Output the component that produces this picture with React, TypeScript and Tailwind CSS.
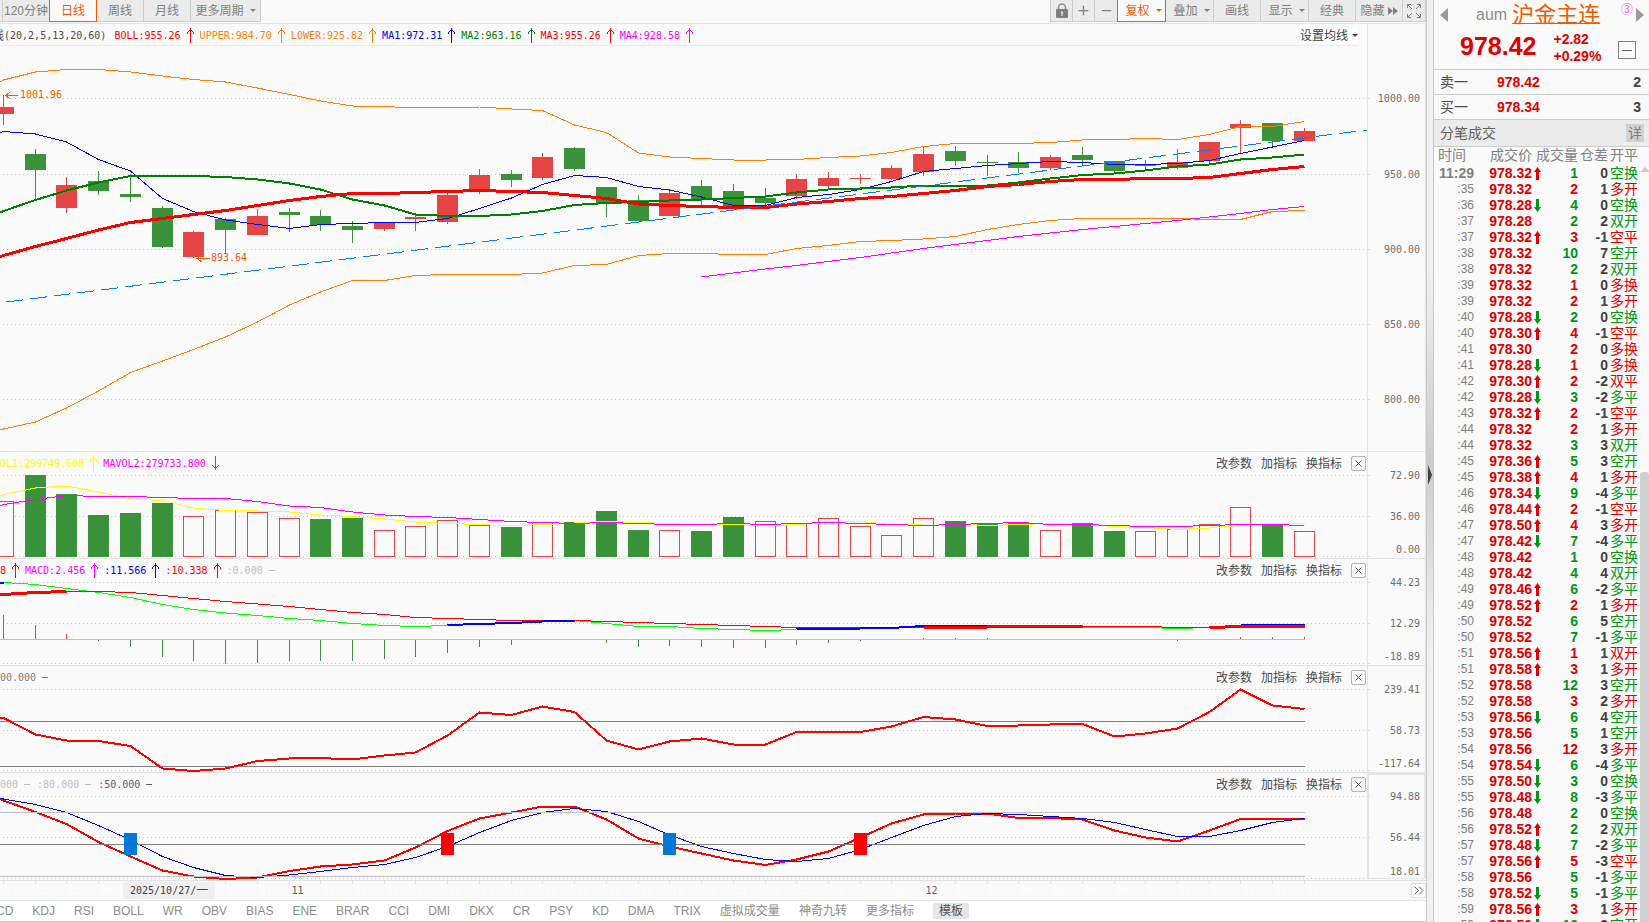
import React from 'react';
import { Minus, Plus, X } from 'lucide-react';

type Dir = 'up' | 'down' | 'flat';
type Candle = [color: 'r' | 'g', high: number, low: number, top: number, bottom: number];
type Tick = [time: string, price: string, dir: '' | 'u' | 'd', volume: number, side: 'r' | 'g', diff: number, type: string];

const RED = '#e64545';
const GREEN = '#3a923a';

// Distance between two trading days and centre of the first one
const STEP = 31.73;
const FIRST = 3.5;
const xAt = (i: number) => Math.floor(FIRST + i * STEP) + 0.5;

const CANDLES: Candle[] = [
    ['r', 95, 125, 107, 114], ['g', 149, 199, 154, 170], ['r', 177, 213, 185, 208], ['g', 171, 195, 181, 191],
    ['g', 174, 202, 194, 197], ['g', 206, 248, 208, 247], ['r', 231, 258, 232, 257], ['g', 218, 254, 219, 230],
    ['r', 209, 235, 216, 235], ['g', 208, 232, 212, 215], ['g', 210, 231, 216, 225], ['g', 221, 243, 226, 230],
    ['r', 222, 231, 223, 229], ['r', 215, 231, 217, 219], ['r', 192, 224, 195, 222], ['r', 169, 194, 175, 190],
    ['g', 170, 187, 174, 180], ['r', 153, 180, 157, 178], ['g', 147, 171, 148, 169], ['g', 187, 217, 187, 203],
    ['g', 195, 221, 200, 221], ['r', 191, 216, 193, 216], ['g', 180, 205, 186, 200], ['g', 184, 206, 191, 206],
    ['g', 188, 205, 198, 203], ['r', 174, 199, 179, 196], ['r', 172, 189, 178, 186], ['r', 174, 184, 178, 179],
    ['r', 165, 180, 168, 179], ['r', 147, 176, 154, 172], ['g', 146, 166, 151, 161], ['g', 155, 176, 162, 163],
    ['g', 152, 173, 162, 168], ['r', 155, 170, 157, 168], ['g', 147, 166, 155, 160], ['g', 161, 172, 161, 171],
    ['r', 160, 170, 165, 166], ['r', 149, 169, 162, 168], ['r', 142, 164, 142, 161], ['r', 120, 153, 124, 128],
    ['g', 123, 147, 123, 141], ['r', 128, 141, 131, 141],
];

const UPPER = [80, 72, 69.5, 69.5, 72, 76, 79.5, 82, 88, 94.5, 101, 106, 106.5, 108, 107.5, 107, 109, 110.5, 125, 132.5, 153, 157, 158.5, 160, 160, 159.5, 157.5, 156, 152.5, 146.5, 143.5, 143.5, 143.5, 142.5, 140, 139.5, 138.5, 139.5, 134.5, 126.5, 126.5, 121.5];
const LOWER = [429, 422, 408, 391, 372.5, 361, 349.5, 337, 322, 305, 292, 280.5, 280.5, 275.5, 274.5, 274.5, 274.5, 273, 265.5, 264.5, 255.5, 253.5, 253.5, 254.5, 254.5, 248.5, 245.5, 241.5, 240.5, 239, 236.5, 229.5, 224.5, 220.5, 218.5, 218.5, 218.5, 218.5, 219.5, 219.5, 211.5, 210.5];
const MA1 = [131.5, 134, 142, 159.5, 171, 198.5, 211.5, 220, 224.5, 228.5, 224.5, 223.5, 222.5, 222.5, 218.5, 208.5, 198, 184.5, 175.5, 177.5, 186.5, 190, 197, 205.5, 205.5, 197.5, 194.5, 189.5, 181.5, 171.5, 168.5, 165.5, 163.5, 161.5, 162.5, 164.5, 164.5, 163.5, 160.5, 153.5, 147, 140.5];
const MA2 = [211, 200, 190.5, 182.5, 176, 176, 176, 177, 179.5, 183.5, 189.5, 199.5, 205.5, 214.5, 216, 216, 214.5, 211, 205, 203, 202, 200.5, 199.5, 198, 196.5, 192.5, 189.5, 188.5, 187.5, 185.5, 185.5, 185.5, 182.5, 178.5, 175, 173.5, 170.5, 166.5, 164.5, 159.5, 157.5, 154.5];
const BOLL = [255.5, 246.5, 238.5, 230, 222.5, 218.5, 214.5, 210.5, 205.5, 200.5, 196.5, 193.5, 193.5, 192.5, 191.5, 190.5, 191.5, 192.5, 195.5, 198.5, 204, 205.5, 206.5, 207.5, 207.5, 204, 201.5, 198.5, 196.5, 193.5, 190.5, 186.5, 184.5, 181.5, 179.5, 179.5, 178.5, 178.5, 177.5, 173.5, 169.5, 166.5];
const MA4 = [277, 273, 269, 265.5, 261.5, 257.5, 253, 248.5, 244.5, 240.5, 236.5, 233, 229.5, 226.5, 223.5, 220.5, 217, 213.5, 209.5, 206.5];

const VOLUME_TOP = [501, 475, 494, 515, 513, 503, 516, 510, 512, 518, 519, 518, 530, 526, 520, 525, 527, 522, 522, 511, 530, 530, 531, 517, 521, 523, 518, 526, 535, 518, 521, 524, 522, 530, 523, 531, 531, 529, 524, 507, 525, 531];
const VOLUME_FALLING = [1, 2, 3, 4, 5, 10, 11, 16, 18, 19, 20, 22, 23, 30, 31, 32, 34, 35, 40];
const MAVOL1 = [494.5, 488, 486, 492, 499, 500.5, 508, 510.5, 511, 512, 515, 516.5, 519, 522, 523.5, 524.5, 526, 524.5, 523, 521.5, 522.5, 523.5, 525, 524.5, 526, 524.5, 522.5, 521.5, 524.5, 524, 524, 525.5, 524.5, 523.5, 524.5, 526.5, 527.5, 529.5, 528, 525.5, 523.5, 523.5];
const MAVOL2 = [504.5, 499.5, 495.5, 496.5, 496.5, 497.5, 498.5, 498.5, 501.5, 506, 507.5, 512, 515, 516.5, 517.5, 519.5, 521.5, 522.5, 523.5, 522.5, 523.5, 524.5, 524.5, 523.5, 524.5, 523.5, 522.5, 523.5, 524.5, 525.5, 524.5, 523.5, 522.5, 524.5, 524.5, 525.5, 526.5, 526.5, 525.5, 524.5, 524.5, 525.5];

const MACD_BASE = 639;
const MACD_BARS = [615, 625, 634, 641, 647, 657, 661, 664, 663, 661, 661, 661, 659, 657, 653, 647, 645, 0, 0, 643, 647, 646, 647, 648, 648, 645, 643, 641, 0, 638, 638, 638, 0, 0, 0, 0, 0, 641, 0, 637, 637, 637];
const MACD_LINES: { from: number; color: string; width: number; ys: number[] }[] = [
    { from: 0, color: '#00ff00', width: 1, ys: [582.5, 584.5, 588.5, 592.5, 597.5, 604.5, 609.5, 613, 615.5, 618.5, 620.5, 623.5, 625.5, 626.5, 625.5] },
    { from: 18, color: '#00ff00', width: 1, ys: [620.5, 623.5, 626.5, 626.5, 628.5, 629.5, 630.5, 629.5] },
    { from: 31, color: '#00ff00', width: 1, ys: [625.5, 626.5, 626.5, 627.5, 627.5, 627.5, 628.5, 627.5] },
    { from: 0, color: '#ff0000', width: 1, ys: [594.5, 592.5, 591.5, 591.5, 592.5, 595.5, 598.5, 601.5, 604, 606.5, 609.5, 612.5, 614.5, 617.5, 618.5, 619.5, 620.5, 620.5, 620.5, 621.5, 622.5, 623.5, 624.5, 625.5, 626.5, 627.5, 627.5, 627.5, 627.5, 627.5, 627.5, 627, 626.5, 626.5, 626.5, 626.5, 626.5, 627.5, 627.5, 626.5, 626.5, 626.5] },
    { from: 14, color: '#0000ff', width: 2, ys: [625, 624, 623, 621.5, 621] },
    { from: 25, color: '#0000ff', width: 2, ys: [629.5, 629, 628.5, 628, 626, 626, 626] },
    { from: 39, color: '#0000ff', width: 2, ys: [625, 625, 625] },
    { from: 0, color: '#ff0000', width: 3, ys: [594.5, 592.5, 591.5] },
    { from: 29, color: '#ff0000', width: 3, ys: [627.5, 627.5, 627, 626.5, 626.5, 626.5] },
    { from: 38, color: '#ff0000', width: 3, ys: [627.5, 626.5, 626.5, 626.5] },
];

const CCI = [718, 734.5, 740.5, 741, 746, 768.5, 771, 768.5, 761, 758.5, 758, 759.5, 755.5, 752.5, 735.5, 712.5, 715, 706.5, 712, 740.5, 749.5, 741.5, 738.5, 744.5, 744.5, 732, 732, 732, 726.5, 717, 719.5, 726, 725.5, 724.5, 724, 736.5, 733.5, 728.5, 712, 689.5, 705.5, 709];
const KD_FAST = [800.5, 812, 824, 842, 856.5, 870.5, 876.5, 879, 877.5, 871, 866.5, 864.5, 860.5, 847.5, 831, 818.5, 812.5, 806.5, 806.5, 819.5, 838.5, 846.5, 853.5, 860.5, 865, 859.5, 851.5, 837.5, 823.5, 814.5, 813.5, 813.5, 818, 818, 819.5, 830.5, 837.5, 841.5, 830.5, 819, 819, 819];
const KD_SLOW = [799, 804.5, 812.5, 825.5, 840, 856.5, 867.5, 875.5, 877.5, 875, 871.5, 867.5, 864.5, 857.5, 846.5, 832.5, 820.5, 812.5, 808.5, 811.5, 821.5, 835, 846.5, 853.5, 859.5, 861.5, 858.5, 849.5, 837.5, 825.5, 816.5, 813.5, 814.5, 816.5, 818.5, 822.5, 829.5, 836.5, 836.5, 830.5, 822.5, 818.5];
const KD_MARKS: [number, string][] = [[4, '#0078d7'], [14, '#ff0000'], [21, '#0078d7'], [27, '#ff0000']];

// Empty entries lie under the date chip
const DAYS = ['21', '22', '23', '24', '', '', '', '30', '31', '11', '04', '05', '06', '07', '10', '11', '12', '13', '14', '17', '18', '19', '20', '21', '24', '25', '26', '27', '28', '12', '02', '03', '04', '05', '08', '09', '10', '11', '12', '15', '16', '17'];
const MONTH_STARTS = [9, 29];

const TICKS: Tick[] = [
    ['11:29', '978.32', 'u', 1, 'g', 0, '空换'],
    [':35', '978.32', '', 2, 'r', 1, '多开'],
    [':36', '978.28', 'd', 4, 'g', 0, '空换'],
    [':37', '978.28', '', 2, 'g', 2, '双开'],
    [':37', '978.32', 'u', 3, 'r', -1, '空平'],
    [':38', '978.32', '', 10, 'g', 7, '空开'],
    [':38', '978.32', '', 2, 'g', 2, '双开'],
    [':39', '978.32', '', 1, 'r', 0, '多换'],
    [':39', '978.32', '', 2, 'r', 1, '多开'],
    [':40', '978.28', 'd', 2, 'g', 0, '空换'],
    [':40', '978.30', 'u', 4, 'r', -1, '空平'],
    [':41', '978.30', '', 2, 'r', 0, '多换'],
    [':41', '978.28', 'd', 1, 'r', 0, '多换'],
    [':42', '978.30', 'u', 2, 'r', -2, '双平'],
    [':42', '978.28', 'd', 3, 'g', -2, '多平'],
    [':43', '978.32', 'u', 2, 'r', -1, '空平'],
    [':44', '978.32', '', 2, 'r', 1, '多开'],
    [':44', '978.32', '', 3, 'g', 3, '双开'],
    [':45', '978.36', 'u', 5, 'g', 3, '空开'],
    [':45', '978.38', 'u', 4, 'r', 1, '多开'],
    [':46', '978.34', 'd', 9, 'g', -4, '多平'],
    [':46', '978.44', 'u', 2, 'r', -1, '空平'],
    [':47', '978.50', 'u', 4, 'r', 3, '多开'],
    [':47', '978.42', 'd', 7, 'g', -4, '多平'],
    [':48', '978.42', '', 1, 'g', 0, '空换'],
    [':48', '978.42', '', 4, 'g', 4, '双开'],
    [':49', '978.46', 'u', 6, 'g', -2, '多平'],
    [':49', '978.52', 'u', 2, 'r', 1, '多开'],
    [':50', '978.52', '', 6, 'g', 5, '空开'],
    [':50', '978.52', '', 7, 'g', -1, '多平'],
    [':51', '978.56', 'u', 1, 'r', 1, '双开'],
    [':51', '978.58', 'u', 3, 'r', 1, '多开'],
    [':52', '978.58', '', 12, 'g', 3, '空开'],
    [':52', '978.58', '', 3, 'r', 2, '多开'],
    [':53', '978.56', 'd', 6, 'g', 4, '空开'],
    [':53', '978.56', '', 5, 'g', 1, '空开'],
    [':54', '978.56', '', 12, 'r', 3, '多开'],
    [':54', '978.54', 'd', 6, 'g', -4, '多平'],
    [':55', '978.50', 'd', 3, 'g', 0, '空换'],
    [':55', '978.48', 'd', 8, 'g', -3, '多平'],
    [':56', '978.48', '', 2, 'g', 0, '空换'],
    [':56', '978.52', 'u', 2, 'g', 2, '双开'],
    [':57', '978.48', 'd', 7, 'g', -2, '多平'],
    [':57', '978.56', 'u', 5, 'r', -3, '空平'],
    [':58', '978.56', '', 5, 'g', -1, '多平'],
    [':58', '978.52', 'd', 5, 'g', -1, '多平'],
    [':59', '978.56', 'u', 3, 'r', 1, '多开'],
    [':59', '978.50', 'd', 10, 'g', 3, '空开'],
];

const TABS = ['KDJ', 'RSI', 'BOLL', 'WR', 'OBV', 'BIAS', 'ENE', 'BRAR', 'CCI', 'DMI', 'DKX', 'CR', 'PSY', 'KD', 'DMA', 'TRIX', '虚拟成交量', '神奇九转', '更多指标'];

const Line: React.FC<{ ys: number[]; color: string; width?: number; from?: number; lead?: number }> = ({ ys, color, width = 1, from = 0, lead }) => (
    <polyline
        points={(lead === undefined ? '' : `0,${lead} `) + ys.map((y, i) => `${xAt(from + i)},${y}`).join(' ')}
        fill="none"
        stroke={color}
        strokeWidth={width}
        strokeLinejoin="round"
    />
);

const Grid: React.FC<{ rows: number[] }> = ({ rows }) => (
    <>
        {rows.map((y) => (
            <line key={y} x1="3" x2="100%" y1={y + 0.5} y2={y + 0.5} stroke="#c8c8c8" strokeDasharray="1 3" />
        ))}
    </>
);

interface AxisProps {
    top: number;
    ticks: number[];
    labels: [string, number][];
    framed?: boolean;
    className?: string;
}

const Axis: React.FC<AxisProps> = ({ top, ticks, labels, framed, className = '' }) => (
    <svg className={`w-[59px] shrink-0 font-mono text-[10px] ${className}`} shapeRendering="crispEdges">
        {framed ? (
            <rect x="1" y="1" width="57" height="105" fill="none" stroke="#e6e6e6" strokeWidth="2" />
        ) : (
            <path d="M0.5 0V600M58.5 0V600" stroke="#e4e4e4" />
        )}
        <g transform={`translate(0 ${-top})`}>
            {ticks.map((y) => (
                <path key={y} d={`M0 ${y + 0.5}h3`} stroke="#dcdcdc" />
            ))}
            {labels.map(([text, y]) => (
                <text key={text} x="53" y={y + 4} textAnchor="end" fill="#6e6e6e">
                    {text}
                </text>
            ))}
        </g>
    </svg>
);

const Legend: React.FC<{ color: string; dir: Dir; children: React.ReactNode }> = ({ color, dir, children }) => (
    <span className="flex shrink-0 items-center gap-1.5" style={{ color }}>
        {children}
        <svg width="7" height="15" viewBox="0 0 7 15" fill="none" stroke="currentColor" shapeRendering="crispEdges">
            {dir === 'up' && <path d="M3.5 0V15M0.5 5.5V4.5L3.5 1.5L6.5 4.5V5.5" />}
            {dir === 'down' && <path d="M3.5 0V14M0.5 8.5V9.5L3.5 12.5L6.5 9.5V8.5" />}
            {dir === 'flat' && <path d="M0 7.5H6" />}
        </svg>
    </span>
);

const Caret = () => <span className="border-x-[3px] border-t-[3px] border-x-transparent border-t-current" />;

const ToolButton: React.FC<{ className: string; active?: boolean; label?: string; children: React.ReactNode }> = ({ className, active, label, children }) => (
    <button
        type="button"
        aria-label={label}
        className={`flex h-[22px] shrink-0 items-center justify-center gap-1.5 whitespace-nowrap ${
            active ? 'border border-t-0 border-[#f05a00] bg-[#fafafa] text-[#f05a00]' : 'border-r border-b border-[#cccccc] bg-[#ebebeb] text-[#808080]'
        } ${className}`}
    >
        {children}
    </button>
);

interface PanelProps {
    top: number;
    rows: number[];
    labels: [string, number][];
    legend: React.ReactNode;
    framed?: boolean;
    children: React.ReactNode;
}

const IndicatorPanel: React.FC<PanelProps> = ({ top, rows, labels, legend, framed, children }) => (
    <section className="flex shrink-0 border-t border-[#e4e4e4]">
        <div className="min-w-0 flex-1">
            <div className="flex h-[23px] items-center justify-between">
                <div className="flex gap-1.5 font-mono text-[10px]">{legend}</div>
                <div className="flex shrink-0 items-center gap-[9px] text-[#4a4a4a]">
                    <button type="button">改参数</button>
                    <button type="button">加指标</button>
                    <button type="button">换指标</button>
                    <button type="button" aria-label="关闭" className="mr-px flex h-[15px] w-[15px] items-center justify-center rounded-[2px] border border-[#b4b4b4]">
                        <X size={11} strokeWidth={2} />
                    </button>
                </div>
            </div>
            <svg className="block h-[83px] w-full overflow-visible" shapeRendering="crispEdges">
                <g transform={`translate(0 ${-top - 24})`}>
                    <Grid rows={rows} />
                    {children}
                </g>
            </svg>
        </div>
        <Axis top={top + 1} ticks={rows} labels={labels} framed={framed} className="h-[106px]" />
    </section>
);

const Toolbar = () => (
    <div className="flex h-6 shrink-0 items-start justify-between border-b border-[#e4e4e4]">
        <div className="flex">
            <ToolButton className="w-[3px]" label="60分钟">{null}</ToolButton>
            <ToolButton className="w-[46px] border-r-0">120分钟</ToolButton>
            <ToolButton className="w-12" active>日线</ToolButton>
            <ToolButton className="w-[47px]">周线</ToolButton>
            <ToolButton className="w-[47px]">月线</ToolButton>
            <ToolButton className="w-[70px]">更多周期<Caret /></ToolButton>
        </div>
        <div className="flex border-l border-[#cccccc]">
            <ToolButton className="w-[22px]" label="锁定">
                <svg width="12" height="15" viewBox="0 0 12 15">
                    <path d="M2.5 7V4.5a3.5 3.5 0 0 1 7 0V7" fill="none" stroke="#909090" strokeWidth="1.6" />
                    <rect x="0" y="6" width="12" height="9" rx="1" fill="#808080" />
                    <path d="M5 8.5h2v2h-.5v2.500h-1v-2.500H5z" fill="#ebebeb" />
                </svg>
            </ToolButton>
            <ToolButton className="w-[22px]" label="放大"><Plus size={15} strokeWidth={2} /></ToolButton>
            <ToolButton className="w-[22px] border-r-0" label="缩小"><Minus size={15} strokeWidth={2} /></ToolButton>
            <ToolButton className="w-[49px] pl-1" active>复权<Caret /></ToolButton>
            <ToolButton className="w-12 pl-1">叠加<Caret /></ToolButton>
            <ToolButton className="w-[47px]">画线</ToolButton>
            <ToolButton className="w-12 pl-1">显示<Caret /></ToolButton>
            <ToolButton className="w-[47px]">经典</ToolButton>
            <ToolButton className="w-[47px]">
                <span className="flex items-center gap-[3px]">
                    隐藏
                    <svg width="10" height="8" viewBox="0 0 10 8" fill="currentColor"><path d="M0 0L5 4L0 8ZM5 0L10 4L5 8Z" /></svg>
                </span>
            </ToolButton>
            <ToolButton className="w-[23px]" label="全屏">
                <svg width="14" height="14" viewBox="0 0 14 14" fill="none" stroke="currentColor">
                    <path d="M.5 4V.5H4M10 .5H13.5V4M13.5 10V13.5H10M4 13.5H.5V10M.5 .5L5 5M13.5 .5L9 5M13.5 13.5L9 9M.5 13.5L5 9" />
                </svg>
            </ToolButton>
        </div>
    </div>
);

const PriceChart = () => (
    <section className="flex min-h-[427px] flex-1">
        <div className="flex min-w-0 flex-1 flex-col">
            <div className="mr-[9px] flex h-[22px] shrink-0 items-center justify-between overflow-hidden border-b border-[#ededed] pt-0.5">
                <div className="-ml-2 flex items-center gap-1.5 font-mono text-[10px]">
                    <span className="mr-0.5 flex items-center text-[#4a4a4a]"><span className="text-xs">线</span>(20,2,5,13,20,60)</span>
                    <Legend color="#ff0000" dir="up">BOLL:955.26</Legend>
                    <Legend color="#ff8000" dir="up">UPPER:984.70</Legend>
                    <Legend color="#ff8000" dir="up">LOWER:925.82</Legend>
                    <Legend color="#0000ff" dir="up">MA1:972.31</Legend>
                    <Legend color="#008000" dir="up">MA2:963.16</Legend>
                    <Legend color="#ff0000" dir="up">MA3:955.26</Legend>
                    <Legend color="#ff00ff" dir="up">MA4:928.58</Legend>
                </div>
                <button type="button" className="flex h-4 items-center gap-1 bg-white text-[#404040]">设置均线<Caret /></button>
            </div>
            <svg className="block min-h-0 w-full flex-1" shapeRendering="crispEdges">
                <g transform="translate(0 -46)">
                    <Grid rows={[98, 174, 249, 324, 399]} />
                    {CANDLES.map(([c, high, low, top, bottom], i) => (
                        <g key={i} fill={c === 'r' ? RED : GREEN}>
                            <rect x={xAt(i) - 0.5} y={high} width="1" height={low - high} />
                            <rect x={xAt(i) - 10.5} y={top} width="21" height={bottom - top} />
                        </g>
                    ))}
                    <Line ys={UPPER} color="#ff8000" lead={82} />
                    <Line ys={LOWER} color="#ff8000" lead={430} />
                    <Line ys={MA1} color="#0000ff" lead={133} />
                    <Line ys={MA2} color="#008000" width={2} lead={212.5} />
                    <Line ys={BOLL} color="#ff0000" width={3} lead={256.5} />
                    <Line ys={MA4} color="#ff00ff" from={22} />
                    <path d="M6 302L1367 130" stroke="#0080ff" strokeDasharray="17 7" />
                    <g stroke="#f05a00" fill="none">
                        <path d="M5 95.5H18M10 92L5.5 95.5L10 99" />
                        <path d="M196 258.5H210M202 255L197 258.5L202 262" />
                    </g>
                    <g fill="#f05a00" className="font-mono text-[10px]">
                        <text x="20" y="98">1001.96</text>
                        <text x="211" y="261">893.64</text>
                    </g>
                </g>
            </svg>
        </div>
        <Axis
            top={24}
            ticks={[98, 174, 249, 324, 399]}
            labels={[['1000.00', 98], ['950.00', 174], ['900.00', 249], ['850.00', 324], ['800.00', 399]]}
            className="self-stretch"
        />
    </section>
);

const DateAxis = () => (
    <div className="relative mt-px flex h-[21px] shrink-0 items-center justify-between border-y border-[#e4e4e4]">
        <svg className="block h-[19px] flex-1" shapeRendering="crispEdges">
            {DAYS.map((day, i) => (
                <g key={i}>
                    <path d={`M${xAt(i)} 0v3`} stroke="#e4e4e4" />
                    {day && (
                        <text x={xAt(i) + 2} y="13" className="font-mono text-[10px]" fill={MONTH_STARTS.includes(i) ? '#606060' : '#ffffff'}>
                            {day}
                        </text>
                    )}
                </g>
            ))}
        </svg>
        <span className="absolute top-px left-[123px] flex h-[17px] items-center rounded-[2px] bg-[#f0f0f0] px-[7px] font-mono text-[10px] text-[#404040]">
            2025/10/27/<span className="text-xs leading-4">一</span>
        </span>
        <button type="button" aria-label="更多" className="flex h-[15px] w-[15px] items-center justify-center border border-[#e0e0e0] bg-white text-[#606060]">
            <svg width="10" height="9" viewBox="0 0 10 9" fill="none" stroke="currentColor" className="shrink-0">
                <path d="M.5 .5L4.500 4.500L.5 8.500M5 .5L9 4.500L5 8.500" />
            </svg>
        </button>
    </div>
);

const IndicatorTabs = () => (
    <nav className="flex h-[21px] shrink-0 items-center gap-[19px] overflow-hidden border-b border-[#cccccc] bg-white text-[#8c8c8c]">
        <button type="button" className="-ml-[22px]">MACD</button>
        {TABS.map((tab) => (
            <button key={tab} type="button" className="shrink-0">{tab}</button>
        ))}
        <button type="button" className="h-4 shrink-0 rounded-[2px] bg-[#e6e6e6] px-1.5 leading-4 text-[#505050]">模板</button>
    </nav>
);

const TickArrow: React.FC<{ dir: 'u' | 'd' }> = ({ dir }) => (
    <svg width="7" height="13" viewBox="0 0 7 13" fill={dir === 'u' ? '#e00000' : '#009614'} className="ml-0.5 block">
        {dir === 'u' ? <path d="M3.5 0L7 5H5V13H2V5H0Z" /> : <path d="M3.5 13L7 8H5V0H2V8H0Z" />}
    </svg>
);

const QuoteSide = () => (
    <aside className="flex w-[215px] shrink-0 flex-col overflow-hidden text-sm">
        {/* Instrument */}
        <header className="h-[69px] shrink-0">
            <div className="flex h-[30px] items-center pr-[5px] pl-1.5">
                <button type="button" aria-label="上一个" className="border-y-[7px] border-r-8 border-y-transparent border-r-[#9a9a9a]" />
                <span className="mr-[5px] ml-7 text-base text-[#8c8c8c]">aum</span>
                <a href="#quote" className="text-[22px] leading-7 text-[#f05a00] underline decoration-1 underline-offset-1">沪金主连</a>
                <span className="mr-[3px] ml-auto self-start text-xs leading-5 text-[#ff50dc]">③</span>
                <button type="button" aria-label="下一个" className="border-y-[7px] border-l-8 border-y-transparent border-l-[#9a9a9a]" />
            </div>
            <div className="flex h-9 items-center pr-[13px] pl-[26px] font-bold text-[#e00000]">
                <span className="pb-1 text-[25px] leading-8">978.42</span>
                <div className="ml-[17px] flex flex-col leading-[17px]">
                    <span>+2.82</span>
                    <span>+0.29%</span>
                </div>
                <button type="button" aria-label="收起" className="mt-1 ml-auto flex h-[18px] w-[18px] items-center justify-center border border-[#808080]">
                    <span className="h-px w-2.5 bg-[#606060]" />
                </button>
            </div>
        </header>

        {/* Best ask and bid */}
        {[['卖一', '978.42', '2'], ['买一', '978.34', '3']].map(([name, price, size]) => (
            <div key={name} className="flex h-[25px] shrink-0 items-center border-t border-[#cccccc] pr-2 pl-1.5">
                <span className="w-[57px] text-[#4a4a4a]">{name}</span>
                <span className="font-bold text-[#e00000]">{price}</span>
                <span className="ml-auto font-bold text-[#404040]">{size}</span>
            </div>
        ))}

        <div className="flex h-7 shrink-0 items-center justify-between border-y border-[#cccccc] bg-[#ebebeb] pr-[5px] pl-1.5 text-[#606060]">
            <h2>分笔成交</h2>
            <button type="button" className="h-[18px] w-[18px] bg-[#d2d2d2] leading-[18px] text-[#808080]">详</button>
        </div>

        {/* Trades */}
        <div className="flex min-h-0 flex-1 overflow-hidden">
            <table className="w-[206px] table-fixed border-collapse self-start text-right leading-4">
                <colgroup>
                    <col className="w-10" />
                    <col className="w-[58px]" />
                    <col className="w-3" />
                    <col className="w-[34px]" />
                    <col className="w-[30px]" />
                    <col className="w-8" />
                </colgroup>
                <thead>
                    <tr className="h-[18px] align-top whitespace-nowrap text-[#808080]">
                        <th className="p-0 pl-1 text-left font-normal">时间</th>
                        <th className="p-0 font-normal">成交价</th>
                        <th className="p-0 font-normal" colSpan={2}>成交量</th>
                        <th className="p-0 font-normal">仓差</th>
                        <th className="p-0 pr-0.5 font-normal">开平</th>
                    </tr>
                </thead>
                <tbody>
                    {TICKS.map(([time, price, dir, volume, side, diff, type], i) => (
                        <tr key={i} className="h-4">
                            <td className={`p-0 text-[#808080] ${i === 0 ? 'font-bold' : 'text-xs leading-4'}`}>{time}</td>
                            <td className="p-0 font-bold text-[#e00000]">{price}</td>
                            <td className="p-0">{dir && <TickArrow dir={dir} />}</td>
                            <td className={`p-0 font-bold ${side === 'r' ? 'text-[#e00000]' : 'text-[#009614]'}`}>{volume}</td>
                            <td className="p-0 font-bold text-[#404040]">{diff}</td>
                            <td className={`p-0 pr-0.5 ${side === 'r' ? 'text-[#e00000]' : 'text-[#009614]'}`}>{type}</td>
                        </tr>
                    ))}
                </tbody>
            </table>
            <div className="flex w-[9px] flex-col items-center pt-5">
                <span className="border-x-[5px] border-b-[5px] border-x-transparent border-b-[#cccccc]" />
                <span className="mt-[300px] w-full flex-1 rounded-t-[3px] bg-[#d0d0d0]" />
            </div>
        </div>
    </aside>
);

const App: React.FC = () => (
    <div className="flex h-screen overflow-hidden bg-[#fafafa] font-['Liberation_Sans','Noto_Sans_CJK_SC',sans-serif] text-xs [--font-mono:'DejaVu_Sans_Mono','Noto_Sans_CJK_SC',monospace]">
        <main className="flex min-w-0 flex-1 flex-col">
            <Toolbar />
            <PriceChart />

            <IndicatorPanel
                top={451}
                rows={[475, 516, 556]}
                labels={[['72.90', 475], ['36.00', 516], ['0.00', 549]]}
                legend={
                    <div className="-ml-[18px] flex gap-1.5">
                        <Legend color="#ffff00" dir="up">MAVOL1:299749.600</Legend>
                        <Legend color="#ff00ff" dir="down">MAVOL2:279733.800</Legend>
                    </div>
                }
            >
                {VOLUME_TOP.map((y, i) =>
                    VOLUME_FALLING.includes(i) ? (
                        <rect key={i} x={xAt(i) - 10.5} y={y} width="21" height={557 - y} fill={GREEN} />
                    ) : (
                        <rect key={i} x={xAt(i) - 10} y={y + 0.5} width="20" height={556 - y} fill="#fafafa" stroke={RED} />
                    )
                )}
                <Line ys={MAVOL1} color="#ffff00" lead={495.5} />
                <Line ys={MAVOL2} color="#ff00ff" lead={505.5} />
            </IndicatorPanel>

            <IndicatorPanel
                top={558}
                rows={[582, 623, 663]}
                labels={[['44.23', 582], ['12.29', 623], ['-18.89', 656]]}
                legend={
                    <>
                        <Legend color="#ff0000" dir="up">8</Legend>
                        <Legend color="#ff00ff" dir="up">MACD:2.456</Legend>
                        <Legend color="#0000ff" dir="up">:11.566</Legend>
                        <Legend color="#ff0000" dir="up">:10.338</Legend>
                        <Legend color="#c0c0c0" dir="flat">:0.000</Legend>
                    </>
                }
            >
                <rect x="0" y={MACD_BASE} width={xAt(41)} height="1" fill="#c0c0c0" />
                {MACD_BARS.map((y, i) =>
                    y === 0 ? null : y < MACD_BASE ? (
                        <rect key={i} x={xAt(i) - 0.5} y={y} width="1" height={MACD_BASE - y} fill={RED} />
                    ) : (
                        <rect key={i} x={xAt(i) - 0.5} y={MACD_BASE + 1} width="1" height={y - MACD_BASE - 1} fill={GREEN} />
                    )
                )}
                {MACD_LINES.map((line, i) => (
                    <Line key={i} {...line} />
                ))}
                <path d="M0 583H4" stroke="#0000ff" strokeWidth="2" />
                <path d="M0 594.5H4" stroke="#ff0000" strokeWidth="3" />
            </IndicatorPanel>

            <IndicatorPanel
                top={665}
                rows={[689, 730, 770]}
                labels={[['239.41', 689], ['58.73', 730], ['-117.64', 763]]}
                legend={<Legend color="#808080" dir="flat">00.000</Legend>}
            >
                <path d={`M0 721.5H${xAt(41)}M0 766.5H${xAt(41)}`} stroke="#808080" />
                <Line ys={CCI} color="#ff0000" width={2} lead={718} />
            </IndicatorPanel>

            <IndicatorPanel
                top={772}
                rows={[796, 837, 878]}
                labels={[['94.88', 796], ['56.44', 837], ['18.01', 871]]}
                framed
                legend={
                    <>
                        <Legend color="#c0c0c0" dir="flat">000</Legend>
                        <Legend color="#c0c0c0" dir="flat">:80.000</Legend>
                        <Legend color="#606060" dir="flat">:50.000</Legend>
                    </>
                }
            >
                <Line ys={KD_FAST} color="#ff0000" width={2} lead={799} />
                <Line ys={KD_SLOW} color="#0000ff" lead={798.5} />
                <path d={`M0 812.5H${xAt(41)}M0 876.5H${xAt(41)}`} stroke="#c0c0c0" />
                <path d={`M0 844.5H${xAt(41)}`} stroke="#808080" />
                {KD_MARKS.map(([i, color]) => (
                    <rect key={i} x={xAt(i) - 6.5} y="833" width="13" height="22" fill={color} />
                ))}
            </IndicatorPanel>

            <DateAxis />
            <IndicatorTabs />
        </main>

        {/* Splitter */}
        <div className="flex w-2 shrink-0 flex-col items-start justify-center border-x border-[#c8c8c8] bg-linear-to-b from-[#f0f0f0] from-30% via-[#cccccc] via-50% to-[#f0f0f0] to-70%">
            <button type="button" aria-label="收起侧栏" className="mt-7 ml-px border-y-[10px] border-l-4 border-y-transparent border-l-[#404040]" />
        </div>

        <QuoteSide />
    </div>
);

export default App;
